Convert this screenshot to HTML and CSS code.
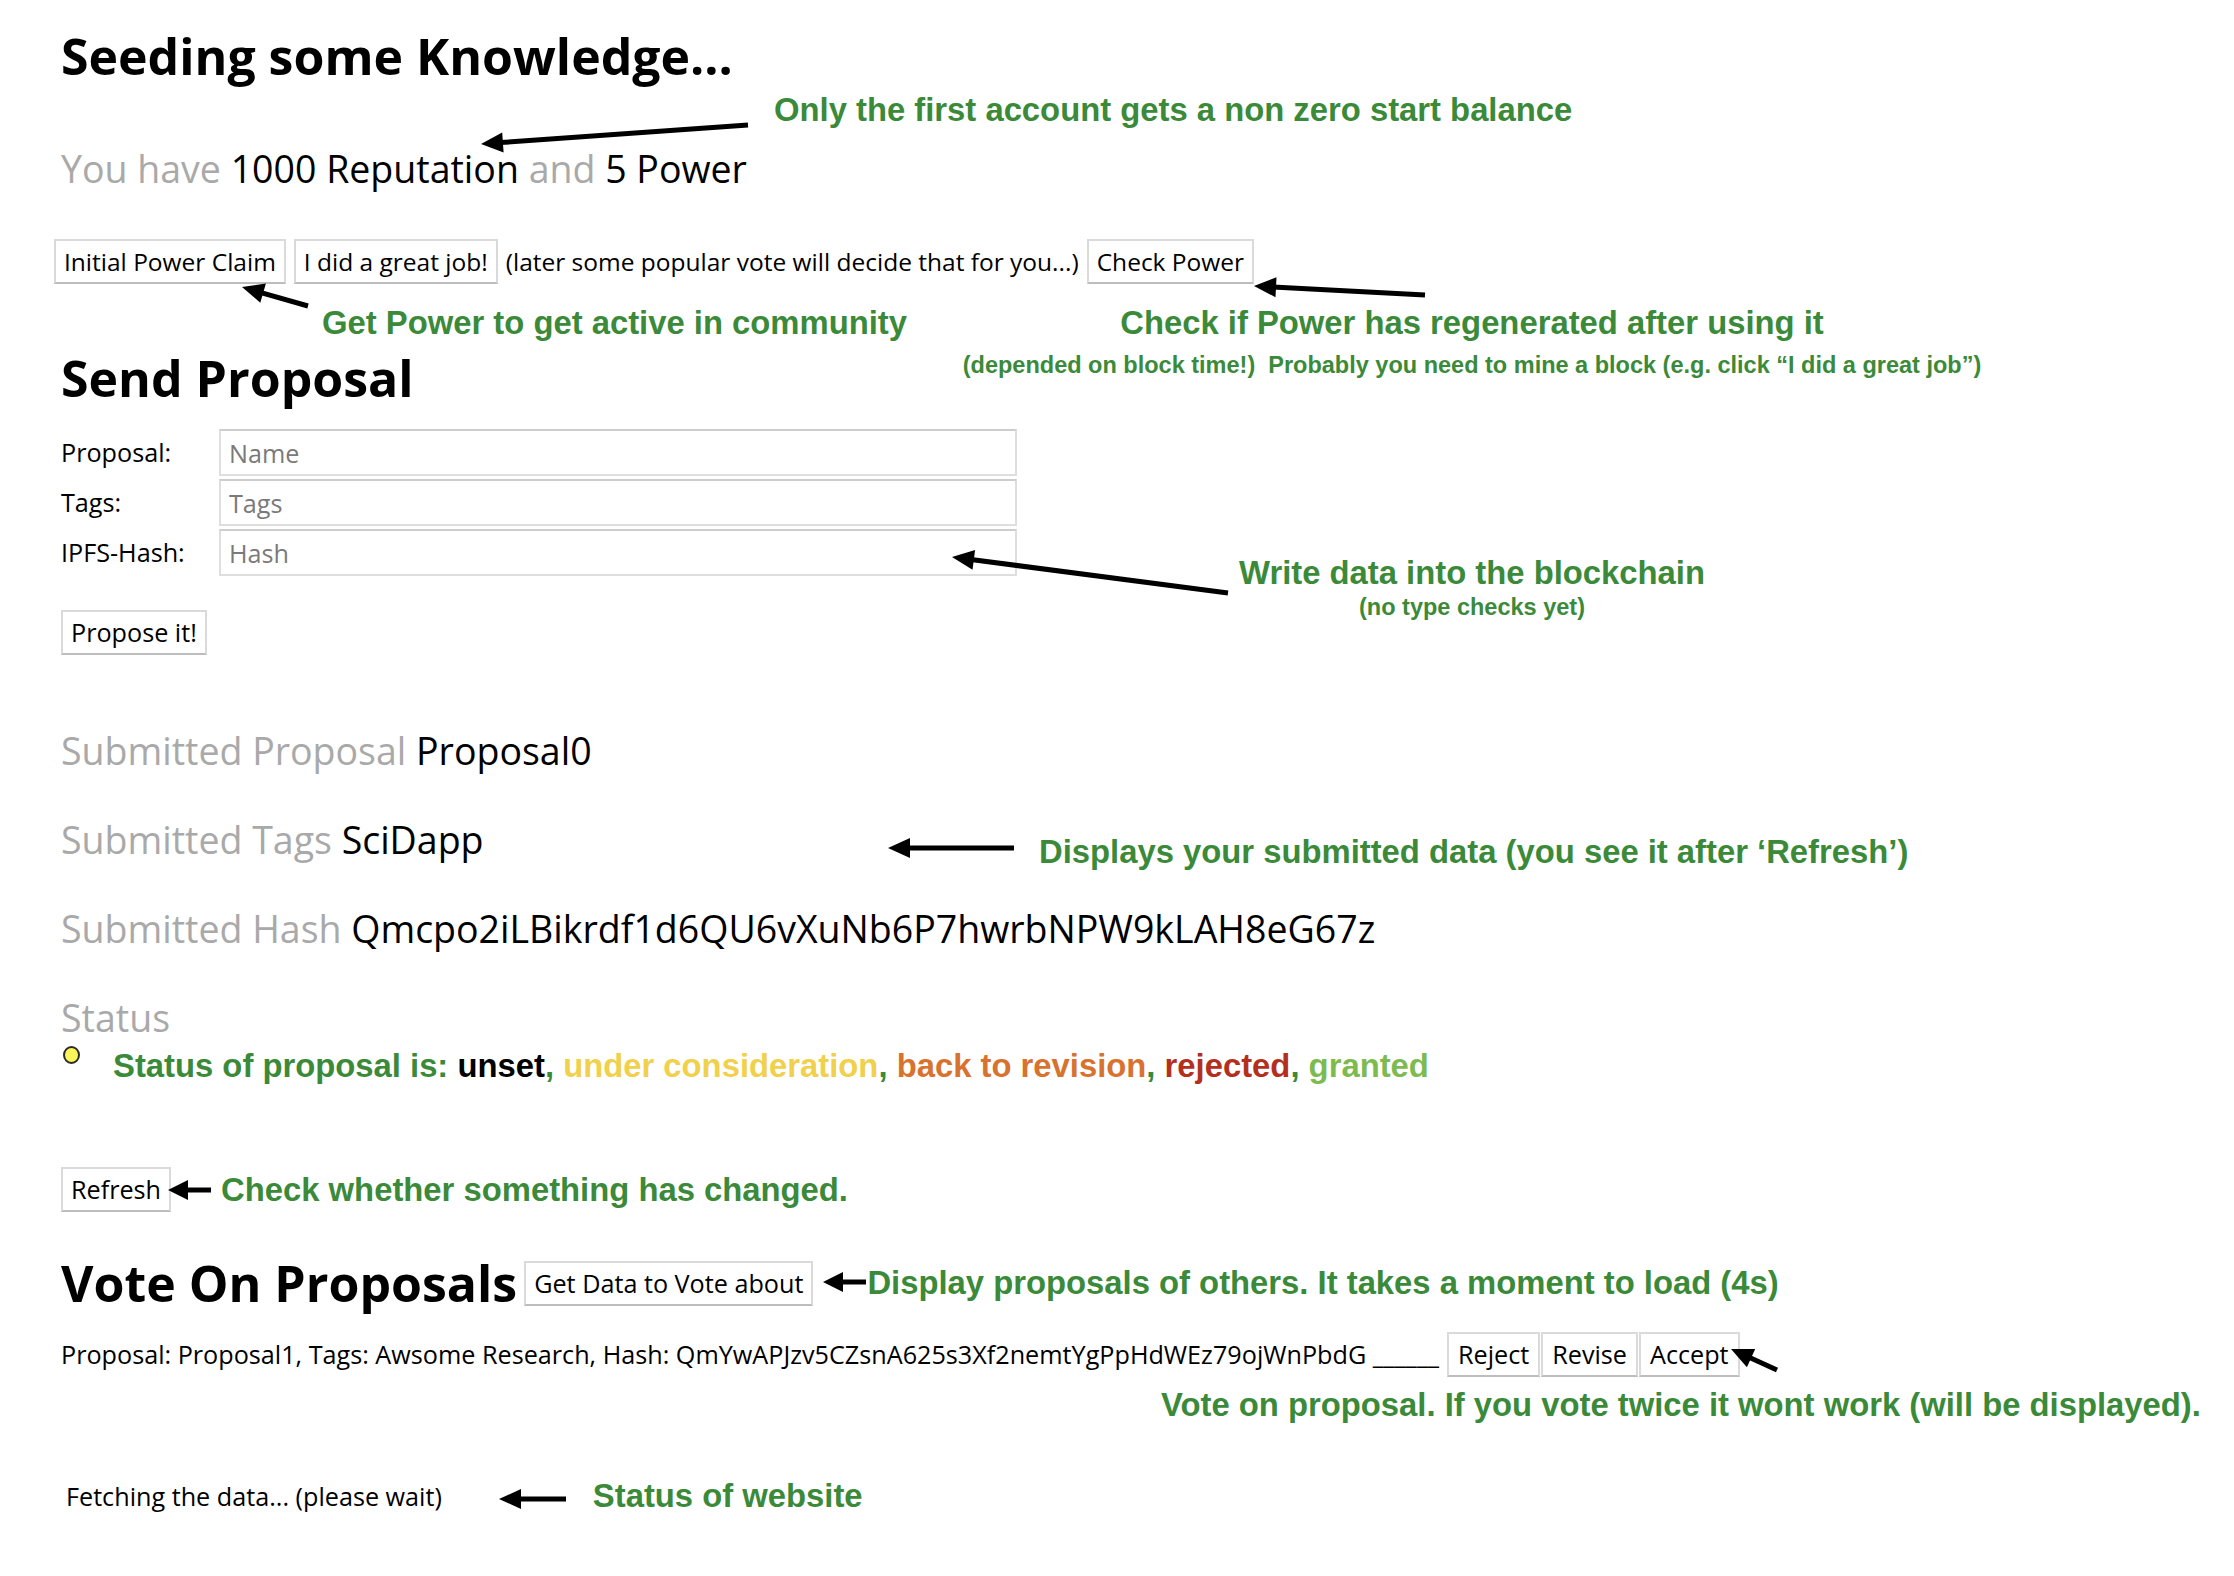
FILE: index.html
```html
<!DOCTYPE html>
<html lang="en">
<head>
<meta charset="utf-8">
<title>Seeding some Knowledge...</title>
<link rel="stylesheet" href="styles.css">
</head>
<body>
<div class="page">
  <h1 class="heading">Seeding some Knowledge...</h1>
  <p class="big balance"><span class="muted">You have</span> 1000 Reputation <span class="muted">and</span> 5 Power</p>

  <div class="actions">
    <button class="btn">Initial Power Claim</button>
    <button class="btn">I did a great job!</button>
    <span class="hint">(later some popular vote will decide that for you...)</span>
    <button class="btn">Check Power</button>
  </div>

  <h2 class="heading send">Send Proposal</h2>
  <div class="form">
    <label class="small">Proposal:</label><input class="field" placeholder="Name">
    <label class="small">Tags:</label><input class="field" placeholder="Tags">
    <label class="small">IPFS-Hash:</label><input class="field" placeholder="Hash">
  </div>
  <button class="btn propose">Propose it!</button>

  <div class="submitted">
    <p class="big"><span class="muted">Submitted Proposal</span> Proposal0</p>
    <p class="big"><span class="muted">Submitted Tags</span> SciDapp</p>
    <p class="big"><span class="muted">Submitted Hash</span> Qmcpo2iLBikrdf1d6QU6vXuNb6P7hwrbNPW9kLAH8eG67z</p>
    <p class="big muted">Status</p>
  </div>

  <div class="status-row">
    <span class="dot"></span>
    <span class="ann">Status of proposal is: <span class="c-unset">unset</span>, <span class="c-consider">under consideration</span>, <span class="c-revise">back to revision</span>, <span class="c-reject">rejected</span>, <span class="c-grant">granted</span></span>
  </div>

  <div class="refresh-row">
    <button class="btn">Refresh</button>
    <span class="ann">Check whether something has changed.</span>
  </div>

  <div class="vote-head">
    <h2 class="heading">Vote On Proposals</h2>
    <button class="btn">Get Data to Vote about</button>
    <span class="ann vote-ann">Display proposals of others. It takes a moment to load (4s)</span>
  </div>

  <div class="proposal-row small">
    <span class="proposal-text">Proposal: Proposal1, Tags: Awsome Research, Hash: QmYwAPJzv5CZsnA625s3Xf2nemtYgPpHdWEz79ojWnPbdG ______</span>
    <div class="vote-btns">
      <button class="btn vbtn">Reject</button>
      <button class="btn vbtn">Revise</button>
      <button class="btn vbtn">Accept</button>
    </div>
  </div>

  <div class="fetch-row">
    <span class="small">Fetching the data... (please wait)</span>
    <span class="ann">Status of website</span>
  </div>

  <div class="ann callout c-balance">Only the first account gets a non zero start balance</div>
  <div class="ann callout c-power">Get Power to get active in community</div>
  <div class="callout c-check">
    <div class="ann">Check if Power has regenerated after using it</div>
    <div class="ann ann-sub c-check-sub">(depended on block time!)&nbsp; Probably you need to mine a block (e.g. click “I did a great job”)</div>
  </div>
  <div class="callout c-write">
    <div class="ann">Write data into the blockchain</div>
    <div class="ann ann-sub">(no type checks yet)</div>
  </div>
  <div class="ann callout c-display">Displays your submitted data (you see it after ‘Refresh’)</div>
  <div class="ann callout c-vote">Vote on proposal. If you vote twice it wont work (will be displayed).</div>

  <svg class="arrows" width="2234" height="1576" viewBox="0 0 2234 1576" aria-hidden="true">
    <g stroke="#000" stroke-width="5" fill="none">
      <line x1="748" y1="125" x2="500" y2="142.6"/>
      <line x1="308" y1="306" x2="261" y2="292.6"/>
      <line x1="1425" y1="295" x2="1273" y2="287"/>
      <line x1="1228" y1="593" x2="971" y2="559.5"/>
      <line x1="1014" y1="848" x2="907" y2="848"/>
      <line x1="211" y1="1190" x2="185" y2="1190"/>
      <line x1="866" y1="1282" x2="840" y2="1282"/>
      <line x1="1777" y1="1370" x2="1749" y2="1357.2"/>
      <line x1="566" y1="1499" x2="518" y2="1499"/>
    </g>
    <g fill="#000">
      <polygon points="481,144 502.2,132.4 503.6,152.4"/>
      <polygon points="242,287 265.9,283.5 260.3,302.7"/>
      <polygon points="1254,286 1276.5,277.2 1275.5,297.2"/>
      <polygon points="952,557 975.1,549.9 972.5,569.7"/>
      <polygon points="888,848 910,838 910,858"/>
      <polygon points="168,1190 188,1180 188,1200"/>
      <polygon points="823,1282 843,1272 843,1292"/>
      <polygon points="1731,1349 1755.2,1349 1746.9,1367.2"/>
      <polygon points="499,1499 521,1489 521,1509"/>
    </g>
  </svg>
</div>
</body>
</html>
```
FILE: styles.css
```css
html, body {
  margin: 0;
  background: #ffffff;
}

body {
  font-family: "Open Sans", "Noto Sans", sans-serif;
  color: #000;
}

.page {
  position: relative;
  width: 2234px;
  height: 1576px;
  box-sizing: border-box;
  padding: 26px 0 0 61px;
  overflow: hidden;
}

.heading {
  margin: 0;
  font-size: 50px;
  line-height: 60px;
  font-weight: 700;
  white-space: nowrap;
}

.big {
  margin: 0;
  font-size: 37.5px;
  line-height: 48px;
  white-space: nowrap;
}

.small {
  font-size: 25.2px;
  line-height: 33px;
  white-space: nowrap;
}

.muted {
  color: #a9a9a9;
}

.balance {
  margin-top: 59px;
}

.btn {
  font-family: "Open Sans", "Noto Sans", sans-serif;
  font-size: 25.2px;
  line-height: 33px;
  padding: 4px 8px;
  margin: 0;
  background: #fff;
  color: #000;
  border: 2px solid #dadada;
  border-bottom-color: #bdbdbd;
  border-radius: 0;
  white-space: nowrap;
}

.actions {
  display: flex;
  align-items: center;
  gap: 8px;
  margin: 46px 0 0 -7px;
}

.actions .btn {
  font-size: 24.5px;
}

.hint {
  font-size: 24.5px;
  line-height: 33px;
  white-space: nowrap;
}

.send {
  margin-top: 64px;
}

.form {
  display: grid;
  grid-template-columns: 158px 798px;
  row-gap: 3px;
  align-items: center;
  margin-top: 21px;
}

.field {
  height: 47px;
  box-sizing: border-box;
  border: 2px solid #dedede;
  border-top-color: #cdcdcd;
  padding: 0 8px;
  margin: 0;
  font-family: "Open Sans", "Noto Sans", sans-serif;
  font-size: 25.2px;
  color: #000;
  background: #fff;
  outline: none;
}

.field::placeholder {
  color: #7a7a7a;
}

.propose {
  display: block;
  margin-top: 34px;
}

.submitted {
  display: flex;
  flex-direction: column;
  gap: 41px;
  margin-top: 72px;
}

.ann {
  font-family: "Liberation Sans", Arial, sans-serif;
  font-weight: 700;
  color: #3b8a3a;
  font-size: 32.8px;
  line-height: 40px;
  white-space: nowrap;
}

.ann-sub {
  font-size: 23.5px;
  line-height: 29px;
}

.c-check-sub {
  margin-top: 8px;
}

.status-row {
  display: flex;
  align-items: flex-start;
  gap: 33px;
  margin-top: 4px;
  padding-left: 2px;
}

.dot {
  width: 13px;
  height: 14px;
  margin-top: 0;
  border-radius: 50%;
  background: #fbf55a;
  border: 2px solid #2a2a2a;
  flex: none;
}

.c-unset { color: #000; }
.c-consider { color: #f1d04b; }
.c-revise { color: #d8722f; }
.c-reject { color: #b3301f; }
.c-grant { color: #7dbb51; }

.refresh-row {
  display: flex;
  align-items: center;
  gap: 50px;
  margin-top: 81px;
}

.vote-head {
  display: flex;
  align-items: center;
  gap: 7px;
  margin-top: 41px;
}

.vote-ann {
  margin-left: 47px;
}

.proposal-row {
  display: flex;
  align-items: center;
  gap: 8px;
  margin-top: 19px;
}

.vote-btns {
  display: flex;
  gap: 1px;
}

.vbtn {
  padding: 4px 9px;
}

.fetch-row {
  display: flex;
  align-items: center;
  gap: 151px;
  margin-top: 99px;
  padding-left: 5px;
}

.callout {
  position: absolute;
}

.c-balance { left: 774px; top: 90px; }
.c-power { left: 322px; top: 303px; }
.c-check { left: 922px; top: 303px; width: 1100px; text-align: center; }
.c-write { left: 922px; top: 553px; width: 1100px; text-align: center; }
.c-display { left: 1039px; top: 832px; }
.c-vote { left: 1161px; top: 1385px; }

.arrows {
  position: absolute;
  left: 0;
  top: 0;
  pointer-events: none;
}
```
